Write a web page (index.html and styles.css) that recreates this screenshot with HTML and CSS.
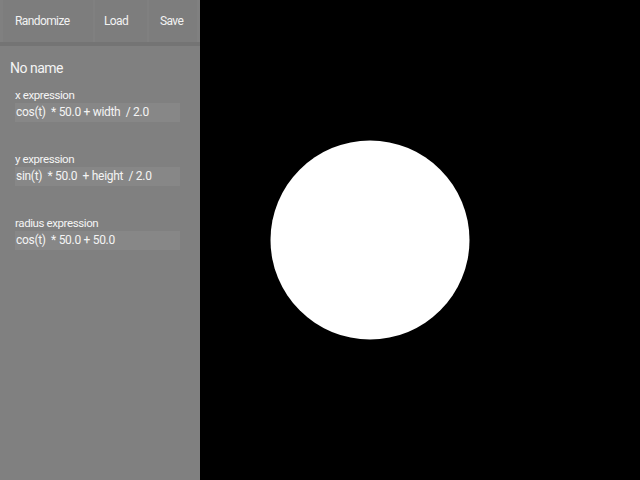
FILE: index.html
```html
<!DOCTYPE html>
<html>
<head>
<meta charset="utf-8">
<link rel="stylesheet" href="styles.css">
</head>
<body>
<div class="app">
  <aside class="panel">
    <div class="toolbar">
      <button class="btn btn-randomize">Randomize</button>
      <button class="btn btn-load">Load</button>
      <button class="btn btn-save">Save</button>
    </div>
    <div class="content">
      <div class="title">No name</div>
      <div class="field">
        <div class="label">x expression</div>
        <div class="input">cos(t)&nbsp; * 50.0 + width&nbsp; / 2.0</div>
      </div>
      <div class="field">
        <div class="label">y expression</div>
        <div class="input">sin(t)&nbsp; * 50.0&nbsp; + height&nbsp; / 2.0</div>
      </div>
      <div class="field">
        <div class="label">radius expression</div>
        <div class="input">cos(t)&nbsp; * 50.0 + 50.0</div>
      </div>
    </div>
  </aside>
  <main class="canvas">
    <svg class="stage" width="440" height="480" viewBox="0 0 440 480">
      <circle cx="170" cy="240" r="99.5" fill="#ffffff"/>
    </svg>
  </main>
</div>
</body>
</html>
```
FILE: styles.css
```css
html, body {
  margin: 0;
  padding: 0;
  width: 640px;
  height: 480px;
  overflow: hidden;
  background: #000;
}
.app {
  display: flex;
  width: 640px;
  height: 480px;
  font-family: Roboto, "Liberation Sans", sans-serif;
}
.panel {
  width: 200px;
  height: 480px;
  background: #808080;
  display: flex;
  flex-direction: column;
}
.toolbar {
  height: 42px;
  display: flex;
  gap: 2px;
  padding: 0 3px 0 3px;
  border-bottom: 4px solid #747474;
  box-sizing: content-box;
}
.btn {
  border: none;
  margin: 0;
  padding: 0;
  background: #7d7d7d;
  color: #f2f2f2;
  font-family: Roboto, "Liberation Sans", sans-serif;
  font-size: 12px;
  letter-spacing: -0.6px;
  height: 42px;
  text-align: left;
}
.btn-randomize { width: 90px; padding-left: 12px; }
.btn-load { width: 52px; padding-left: 9px; }
.btn-save { width: 48px; padding-left: 11px; }
.content {
  padding: 14px 0 0 10px;
}
.title {
  color: #f4f4f4;
  font-size: 14px;
  line-height: 16px;
  letter-spacing: -0.5px;
  margin-bottom: 12px;
}
.field {
  padding-left: 5px;
  height: 64px;
}
.label {
  color: #f4f4f4;
  font-size: 11.5px;
  line-height: 14px;
  margin-bottom: 1px;
  letter-spacing: -0.4px;
}
.input {
  width: 165px;
  height: 19px;
  line-height: 19px;
  background: #878787;
  color: #f4f4f4;
  font-size: 12px;
  letter-spacing: -0.3px;
  padding-left: 1px;
  box-sizing: border-box;
  white-space: nowrap;
}
.canvas {
  flex: 1;
  background: #000;
}
.stage {
  display: block;
}
```
